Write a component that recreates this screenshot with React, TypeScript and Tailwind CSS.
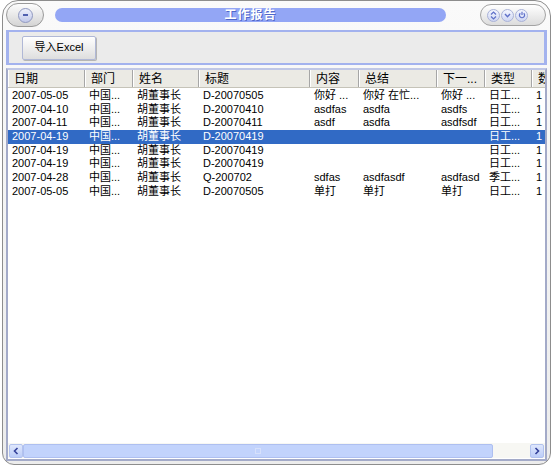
import React from 'react';

const cols = [
  { label: '日期', w: 77 },
  { label: '部门', w: 48 },
  { label: '姓名', w: 66 },
  { label: '标题', w: 111 },
  { label: '内容', w: 49 },
  { label: '总结', w: 78 },
  { label: '下一...', w: 48 },
  { label: '类型', w: 47 },
  { label: '数', w: 40 },
];

const rows = [
  ['2007-05-05', '中国...', '胡董事长', 'D-20070505', '你好 ...', '你好 在忙...', '你好 ...', '日工...', '1'],
  ['2007-04-10', '中国...', '胡董事长', 'D-20070410', 'asdfas', 'asdfa', 'asdfs', '日工...', '1'],
  ['2007-04-11', '中国...', '胡董事长', 'D-20070411', 'asdf', 'asdfa', 'asdfsdf', '日工...', '1'],
  ['2007-04-19', '中国...', '胡董事长', 'D-20070419', '', '', '', '日工...', '1'],
  ['2007-04-19', '中国...', '胡董事长', 'D-20070419', '', '', '', '日工...', '1'],
  ['2007-04-19', '中国...', '胡董事长', 'D-20070419', '', '', '', '日工...', '1'],
  ['2007-04-28', '中国...', '胡董事长', 'Q-200702', 'sdfas', 'asdfasdf', 'asdfasd', '季工...', '1'],
  ['2007-05-05', '中国...', '胡董事长', 'D-20070505', '单打', '单打', '单打', '日工...', '1'],
];

const font = { fontFamily: '"Liberation Sans", "Noto Sans CJK SC", sans-serif' };

function CircleBtn({ children }: { children: React.ReactNode }) {
  return (
    <div className="w-[13px] h-[13px] rounded-full border border-[#a9b2d8] bg-gradient-to-b from-[#f4f6ff] to-[#cfd6f2] flex items-center justify-center">
      {children}
    </div>
  );
}

export default function App() {
  return (
    <div className="w-[554px] h-[468px] bg-white" style={font}>
      <div className="w-full h-full pl-[2px] pr-[3px] pb-[3px]">
        <div className="h-full rounded-[12px] rounded-t-[16px] border border-[#8d8d8d] bg-gradient-to-b from-[#fafafa] to-[#ececec] flex flex-col">
          {/* title bar */}
          <div className="h-[28px] flex items-center pl-[3px] pr-[4px] shrink-0">
            <div className="w-[38px] h-[24px] rounded-full border border-[#9a9a9a] bg-gradient-to-b from-[#fdfdfd] to-[#d4d4d4] flex items-center justify-center">
              <div className="w-[15px] h-[15px] rounded-full border border-[#8f98c0] bg-gradient-to-b from-[#eef0fb] to-[#c2c9ea] flex items-center justify-center">
                <div className="w-[5px] h-[2px] bg-[#5060b0]" />
              </div>
            </div>
            <div className="ml-[11px] flex-1 h-[14px] rounded-full bg-[#93a6f5] flex items-center justify-center">
              <span className="text-white text-[12px] font-bold leading-none tracking-[1px] [text-shadow:1px_1px_0_#4f66c8]">工作报告</span>
            </div>
            <div className="ml-[34px] w-[66px] h-[22px] rounded-full border border-[#a3a3a3] bg-gradient-to-b from-[#ffffff] to-[#dcdcdc] flex items-center pl-[6px] gap-[1px]">
              <CircleBtn>
                <svg width="7" height="9" viewBox="0 0 7 9">
                  <path d="M1 3.5 L3.5 1 L6 3.5 M1 5.5 L3.5 8 L6 5.5" fill="none" stroke="#5f70c8" strokeWidth="1.2" />
                </svg>
              </CircleBtn>
              <CircleBtn>
                <svg width="7" height="5" viewBox="0 0 7 5">
                  <path d="M1 1 L3.5 3.8 L6 1" fill="none" stroke="#5f70c8" strokeWidth="1.4" />
                </svg>
              </CircleBtn>
              <CircleBtn>
                <svg width="8" height="8" viewBox="0 0 8 8">
                  <path d="M2.3 2.2 A2.6 2.6 0 1 0 5.7 2.2" fill="none" stroke="#5f70c8" strokeWidth="1.2" />
                  <path d="M4 0.8 L4 4" stroke="#5f70c8" strokeWidth="1.2" />
                </svg>
              </CircleBtn>
            </div>
          </div>

          {/* toolbar */}
          <div className="mt-[1px] mx-[3px] h-[35px] border-x-[3px] border-y-[2px] border-[#a3b2ee] bg-[#ebebeb] flex items-center pl-[13px] shrink-0">
            <div className="w-[74px] h-[24px] border border-[#b0b8d6] bg-gradient-to-b from-[#ffffff] to-[#dedede] rounded-[2px] flex items-center justify-center text-[11px] text-black shadow-[1px_1px_0_#b5b5b5]">
              导入Excel
            </div>
          </div>

          {/* table panel */}
          <div className="mt-[3px] mx-[3px] mb-[3px] flex-1 border-[2px] border-[#a3aac8] border-t-[#c0c7e6] bg-white flex flex-col overflow-hidden">
            <div className="flex-1 overflow-hidden">
              <div className="flex h-[18px] bg-[#ebeae4] border-b border-[#c5c3b8]">
                {cols.map((c, i) => (
                  <div
                    key={i}
                    className="shrink-0 h-full border-r border-[#a6a6a6] border-l border-l-white pl-[5px] text-[12px] leading-[18px] text-black overflow-hidden whitespace-nowrap"
                    style={{ width: c.w }}
                  >
                    {c.label}
                  </div>
                ))}
              </div>
              <div className="pt-[1px]">
                {rows.map((r, ri) => (
                  <div
                    key={ri}
                    className={`flex h-[13.7px] text-[11px] leading-[13.7px] ${ri === 3 ? 'bg-[#316ac5] text-white' : 'text-black'}`}
                  >
                    {r.map((v, ci) => (
                      <div
                        key={ci}
                        className="shrink-0 pl-[4px] overflow-hidden whitespace-nowrap"
                        style={{ width: cols[ci].w }}
                      >
                        {v}
                      </div>
                    ))}
                  </div>
                ))}
              </div>
            </div>
            {/* horizontal scrollbar */}
            <div className="h-[15px] flex items-center bg-[#f7f7f3] shrink-0 px-[1px] mb-[1px]">
              <div className="shrink-0 w-[14px] h-[14px] bg-gradient-to-b from-[#dfe7fc] to-[#bccdf8] border border-[#b2c2ee] rounded-[2px] flex items-center justify-center">
                <svg width="6" height="8" viewBox="0 0 6 8">
                  <path d="M4.5 1 L1.5 4 L4.5 7" fill="none" stroke="#34419a" strokeWidth="1.6" />
                </svg>
              </div>
              <div className="flex-1 h-[14px] flex">
                <div className="shrink-0 w-[470px] h-full bg-[#c2d3fc] border border-[#aebff0] rounded-[2px] flex items-center justify-center">
                  <div className="w-[6px] h-[6px] border border-[#d6e0fb]" />
                </div>
              </div>
              <div className="shrink-0 w-[14px] h-[14px] bg-gradient-to-b from-[#dfe7fc] to-[#bccdf8] border border-[#b2c2ee] rounded-[2px] flex items-center justify-center">
                <svg width="6" height="8" viewBox="0 0 6 8">
                  <path d="M1.5 1 L4.5 4 L1.5 7" fill="none" stroke="#34419a" strokeWidth="1.6" />
                </svg>
              </div>
            </div>
          </div>
        </div>
      </div>
    </div>
  );
}
